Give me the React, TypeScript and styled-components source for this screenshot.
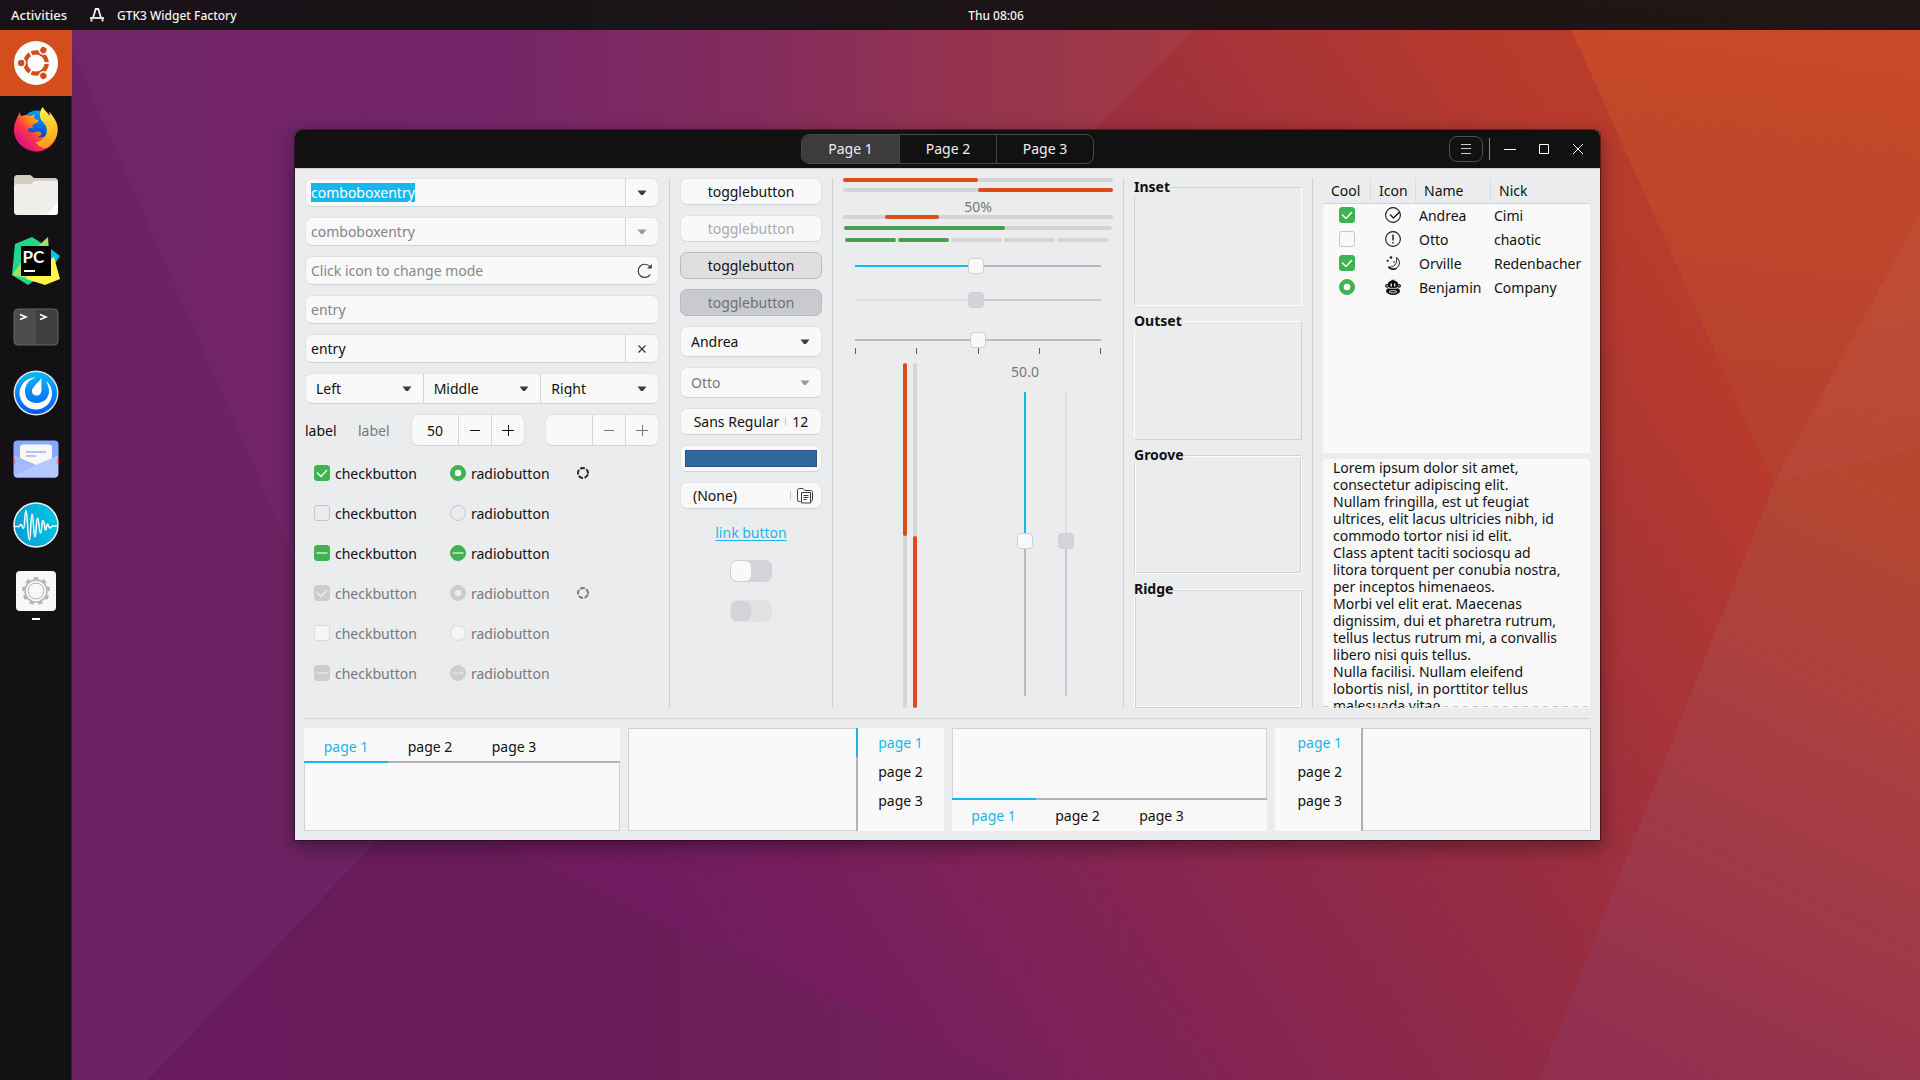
import React, { useEffect, useRef } from "react";
import styled, { createGlobalStyle, css } from "styled-components";

const c = {
  bg: "#ebecee",
  base: "#f9f9f9",
  text: "#111111",
  dim: "#77787a",
  line: "#d3d4d8",
  strong: "#b0b3b9",
  blue: "#19b6ee",
  green: "#3eb34f",
  level: "#469f51",
  orange: "#df4a16",
  trough: "#d3d4d6",
};

const GlobalStyle = createGlobalStyle`
  * { box-sizing: border-box; }
  body {
    margin: 0;
    background: #6c2363;
    color: ${c.text};
    font: 14px/17px "Noto Sans", "Open Sans", sans-serif;
  }
  button, input, select, textarea { font: inherit; color: inherit; margin: 0; }
  ::selection { background: ${c.blue}; color: #ffffff; }
`;

/* ---------- desktop shell ---------- */

const Screen = styled.div`
  position: relative;
  min-height: 100vh;
  display: grid;
  grid-template: 30px 1fr / 72px 1fr;
  isolation: isolate;
`;

const WallpaperArt = styled.svg`
  position: absolute;
  inset: 0;
  width: 100%;
  height: 100%;
  z-index: -1;
`;

const TopBar = styled.header`
  grid-column: 1 / -1;
  display: grid;
  grid-template-columns: 72px 1fr;
  align-items: center;
  background: rgba(17, 17, 17, 0.92);
  color: #f2f2f2;
  font-size: 12px;
  font-weight: 500;
`;

const TopLeft = styled.div`
  grid-area: 1 / 1 / 2 / -1;
  display: flex;
  align-items: center;
  padding-left: 10px;
  gap: 22px;
`;

const AppName = styled.div`
  display: flex;
  align-items: center;
  gap: 13px;
`;

const Clock = styled.time`
  grid-area: 1 / 2;
  justify-self: center;
`;

const BareButton = styled.button`
  display: flex;
  align-items: center;
  justify-content: center;
  padding: 0;
  border: 0;
  background: none;
`;

const ActivitiesButton = styled(BareButton)`
  min-width: 58px;
  font-size: 13px;
`;

const Dock = styled.nav`
  display: flex;
  flex-direction: column;
  background: rgba(17, 17, 17, 0.96);
  border-right: 1px solid #2c2a2c;
`;

const DockItem = styled(BareButton)<{ $active?: boolean; $running?: boolean }>`
  position: relative;
  height: 66px;
  margin-right: -1px;
  background: ${(p) => (p.$active ? "#d44e1d" : "none")};
  &::after {
    content: "";
    display: ${(p) => (p.$running ? "block" : "none")};
    position: absolute;
    left: 32px;
    bottom: 4px;
    width: 8px;
    height: 2px;
    background: #ffffff;
  }
`;

const Workspace = styled.main`
  padding: 100px 320px 100px 223px;
`;

/* ---------- window ---------- */

const Window = styled.section`
  border-radius: 6px 6px 0 0;
  background: ${c.bg};
  box-shadow: 0 0 0 1px rgba(0, 0, 0, 0.4), 0 6px 18px 2px rgba(0, 0, 0, 0.35);
`;

const HeaderBar = styled.header`
  display: grid;
  grid-template-columns: 1fr auto 1fr;
  align-items: center;
  height: 39px;
  border-radius: 6px 6px 0 0;
  border-bottom: 1px solid #cbccd0;
  background: #111111;
  color: #eeeeee;
`;

const StackSwitcher = styled.div`
  grid-column: 2;
  display: flex;
  border: 1px solid #484848;
  border-radius: 8px;
  overflow: hidden;
`;

const StackTab = styled(BareButton)<{ $active?: boolean }>`
  width: 97px;
  height: 28px;
  padding-bottom: 1px;
  background: ${(p) => (p.$active ? "#3c3c3c" : "none")};
  & + & { border-left: 1px solid #484848; }
`;

const WindowControls = styled.div`
  grid-column: 3;
  justify-self: end;
  display: flex;
  align-items: center;
  padding-right: 5px;
`;

const MenuButton = styled(BareButton)`
  width: 34px;
  height: 26px;
  border: 1px solid #4e4e4e;
  border-radius: 8px;
`;

const ControlSeparator = styled.span`
  width: 1px;
  height: 22px;
  margin: 0 3px 0 6px;
  background: #858585;
`;

const WindowButton = styled(BareButton)`
  width: 34px;
  height: 34px;
`;

const Content = styled.div`
  padding: 9px 10px 9px;
`;

const Columns = styled.div`
  display: grid;
  grid-template-columns: 354fr 1px 142fr 1px 270fr 1px 168fr 1px 267fr;
  gap: 10px;
  & > * { min-width: 0; }
`;

const VRule = styled.span`
  background: #ced0d4;
`;

const HRule = styled.hr`
  height: 1px;
  margin: 10px 0 9px;
  border: 0;
  background: ${c.line};
`;

const Stack = styled.div`
  display: flex;
  flex-direction: column;
  gap: 10px;
`;

/* ---------- entries, combos, buttons ---------- */

const raised = css`
  border: 1px solid #e1e2e5;
  border-bottom-color: ${c.line};
  border-radius: 7px;
  background: ${c.base};
`;

const Entry = styled.div<{ $h?: number }>`
  ${raised}
  display: flex;
  height: ${(p) => p.$h ?? 29}px;
  overflow: hidden;
`;

const EntryInput = styled.input<{ $center?: boolean }>`
  flex: 1;
  min-width: 0;
  height: 100%;
  padding: 0 5px;
  border: 0;
  outline: 0;
  background: none;
  line-height: 17px;
  text-align: ${(p) => (p.$center ? "center" : "left")};
  appearance: textfield;
  &::-webkit-inner-spin-button { display: none; }
  &::placeholder { color: #88898b; opacity: 1; }
  &:disabled { color: #838486; }
`;

const EntryButton = styled(BareButton)<{ $flat?: boolean }>`
  width: ${(p) => (p.$flat ? 26 : 33)}px;
  border-left: ${(p) => (p.$flat ? "0" : `1px solid ${c.line}`)};
  &:disabled { color: ${c.dim}; }
`;

const ComboWrap = styled.span`
  display: grid;
  flex: 1;
  align-items: center;
  & + & { border-left: 1px solid ${c.line}; }
  & > svg {
    grid-area: 1 / 1;
    justify-self: end;
    margin-right: 11px;
    pointer-events: none;
  }
`;

const Select = styled.select`
  grid-area: 1 / 1;
  width: 100%;
  height: 100%;
  padding: 0 24px 0 10px;
  border: 0;
  outline: 0;
  background: none;
  appearance: none;
  &:disabled { color: ${c.dim}; opacity: 1; }
  &:disabled + svg { opacity: 0.5; }
`;

const SpinRow = styled.div`
  display: flex;
  align-items: center;
  gap: 20px;
`;

const TextLabel = styled.span<{ $dim?: boolean }>`
  flex: 1;
  color: ${(p) => (p.$dim ? c.dim : c.text)};
`;

const SpinEntry = styled(Entry)`
  width: 114px;
`;

const Button = styled.button`
  ${raised}
  display: flex;
  align-items: center;
  justify-content: center;
  height: 27px;
  padding: 0 5px;
  &:disabled { color: #a9aaac; }
  &[aria-pressed="true"] {
    border-color: #b9bbc1;
    background: #dfdfe0;
  }
  &[aria-pressed="true"]:disabled {
    background: #c9cace;
    color: #6f7073;
  }
`;

const ButtonRule = styled.i`
  width: 1px;
  height: 9px;
  margin: 0 6px;
  background: #c9cace;
`;

const FileButton = styled(Button)`
  justify-content: flex-start;
  padding: 0 8px 0 12px;
`;

const FileName = styled.span`
  flex: 1;
  text-align: left;
`;

const ColorButton = styled(Button)`
  padding: 4px;
`;

const Swatch = styled.span`
  flex: 1;
  height: 17px;
  border: 1px solid #29568d;
  background: #3268a0;
`;

const LinkCell = styled.div`
  display: flex;
  align-items: center;
  justify-content: center;
  height: 27px;
`;

const Link = styled.a`
  color: ${c.blue};
  text-underline-offset: 2px;
`;

const SwitchCell = styled.label`
  display: flex;
  align-items: center;
  justify-content: center;
  height: 30px;
`;

const SwitchInput = styled.input`
  display: flex;
  width: 42px;
  height: 22px;
  padding: 0;
  border: 1px solid #d0d2d6;
  border-radius: 7px;
  background: #d3d4d8;
  appearance: none;
  &::before {
    content: "";
    width: 20px;
    height: 20px;
    border-radius: 6px;
    background: ${c.base};
  }
  &:checked { background: ${c.green}; justify-content: flex-end; }
  &:disabled { background: #e1e2e3; border-color: #e1e2e3; }
  &:disabled::before { background: #d3d4d8; }
`;

const DisabledGlyph = styled.span`
  display: flex;
  opacity: 0.5;
`;

/* ---------- checks and radios ---------- */

const CheckGrid = styled.div`
  display: grid;
  grid-template-columns: 136px 127px 1fr;
  grid-auto-rows: 34px;
  row-gap: 6px;
  align-items: center;
  padding-left: 9px;
`;

const CheckLabel = styled.label<{ $dim?: boolean }>`
  display: flex;
  align-items: center;
  gap: 5px;
  color: ${(p) => (p.$dim ? c.dim : c.text)};
`;

const Box = styled.span`
  display: inline-grid;
  width: 16px;
  height: 16px;
  & > * { grid-area: 1 / 1; }
  & > svg { pointer-events: none; }
`;

const Tick = styled.input`
  width: 16px;
  height: 16px;
  border: 1px solid #c3c6cf;
  border-radius: ${(p) => (p.type === "radio" ? 8 : 3)}px;
  appearance: none;
  &:checked, &:indeterminate { background: ${c.green}; border-color: ${c.green}; }
  &:disabled { background: #f5f6f7; border-color: #d9dadd; }
  &:disabled:checked, &:disabled:indeterminate { background: #cdcdce; border-color: #cdcdce; }
`;

type MarkState = "on" | "off" | "mixed";

function Mark({ kind, state, disabled, name, label }: {
  kind: "checkbox" | "radio"; state: MarkState; disabled?: boolean; name?: string; label?: string;
}) {
  const ref = useRef<HTMLInputElement>(null);
  useEffect(() => {
    if (ref.current && kind === "checkbox") ref.current.indeterminate = state === "mixed";
  }, [kind, state]);
  const ink = disabled ? "#eeeef0" : "#ffffff";
  return (
    <Box>
      <Tick ref={ref} type={kind} name={name} defaultChecked={state === "on"} disabled={disabled} aria-label={label} />
      {state !== "off" && (
        <svg width="16" height="16" viewBox="0 0 16 16" fill="none" stroke={ink}>
          {state === "mixed" && <path d="M2.5 8h11" strokeWidth="2" opacity="0.55" />}
          {state === "on" && kind === "checkbox" && <path d="M3 7.5l4 4 6-6.5" strokeWidth="1.3" />}
          {state === "on" && kind === "radio" && <circle cx="8" cy="8" r="3.3" fill={ink} stroke="none" />}
        </svg>
      )}
    </Box>
  );
}

function Labelled({ kind, state, disabled, name }: {
  kind: "checkbox" | "radio"; state: MarkState; disabled?: boolean; name?: string;
}) {
  return (
    <CheckLabel $dim={disabled}>
      <Mark kind={kind} state={state} disabled={disabled} name={name} />
      {kind === "checkbox" ? "checkbutton" : "radiobutton"}
    </CheckLabel>
  );
}

/* ---------- progress, levels, scales ---------- */

const Bars = styled.div`
  display: flex;
  flex-direction: column;
  gap: 6px;
`;

const Bar = styled.div<{ $from: number; $to: number; $color?: string; $vertical?: boolean }>`
  position: relative;
  width: ${(p) => (p.$vertical ? "4px" : "auto")};
  height: ${(p) => (p.$vertical ? "auto" : "4px")};
  border-radius: 2px;
  background: ${c.trough};
  &::before {
    content: "";
    position: absolute;
    border-radius: 2px;
    background: ${(p) => p.$color ?? c.orange};
    ${(p) =>
      p.$vertical
        ? css`left: 0; right: 0; top: ${p.$from}%; bottom: ${100 - p.$to}%;`
        : css`top: 0; bottom: 0; left: ${p.$from}%; right: ${100 - p.$to}%;`}
  }
`;

const BarText = styled.span`
  display: block;
  color: ${c.dim};
  text-align: center;
`;

const Levels = styled.div`
  display: flex;
  flex-direction: column;
  gap: 8px;
  padding: 7px 1px 0;
`;

const Segments = styled.div`
  display: flex;
  gap: 2px;
  padding: 0 4px 0 1px;
`;

const Segment = styled.span<{ $on: boolean }>`
  flex: 1;
  height: 4px;
  border-radius: 2px;
  background: ${(p) => (p.$on ? c.level : c.trough)};
`;

const Scales = styled.div`
  display: flex;
  flex-direction: column;
  gap: 18px;
  padding: 16px 12px 0;
`;

const MarkedScale = styled.div`
  display: flex;
  flex-direction: column;
  padding-top: 6px;
`;

const Marks = styled.div`
  display: flex;
  justify-content: space-between;
  & > i { width: 1px; height: 6px; background: #58595b; }
`;

const Range = styled.input<{ $fill: string; $rest: string; $vertical?: boolean }>`
  display: block;
  width: ${(p) => (p.$vertical ? "16px" : "100%")};
  height: ${(p) => (p.$vertical ? "304px" : "16px")};
  writing-mode: ${(p) => (p.$vertical ? "vertical-lr" : "horizontal-tb")};
  appearance: none;
  background: linear-gradient(${(p) => (p.$vertical ? "to bottom" : "to right")}, ${(p) => p.$fill} 50%, ${(p) => p.$rest} 50%)
    center / ${(p) => (p.$vertical ? "2px 100%" : "100% 2px")} no-repeat;
  &::-webkit-slider-thumb {
    width: 16px;
    height: 16px;
    border: 1px solid #cfd0d4;
    border-radius: 4px;
    background: ${c.base};
    appearance: none;
  }
  &:disabled::-webkit-slider-thumb { background: #d3d4d7; }
`;

const Verticals = styled.div`
  display: grid;
  grid-template-columns: 1fr 1fr;
  height: 345px;
  margin-top: 9px;
`;

const VBars = styled.div`
  display: flex;
  justify-content: center;
  gap: 6px;
  padding-right: 2px;
`;

const VScales = styled.div`
  display: flex;
  justify-content: center;
  align-items: flex-end;
  gap: 14px;
  padding-bottom: 12px;
`;

const VScale = styled.div`
  display: flex;
  flex-direction: column;
  align-items: center;
  gap: 12px;
  width: 27px;
`;

/* ---------- frames ---------- */

const Frames = styled.div`
  display: flex;
  flex-direction: column;
  gap: 6px;
`;

const Frame = styled.fieldset<{ $a: string; $b: string; $double?: boolean }>`
  height: 128px;
  margin: 0;
  padding: 0;
  border: 1px solid;
  border-color: ${(p) => `${p.$a} ${p.$b} ${p.$b} ${p.$a}`};
  box-shadow: ${(p) => (p.$double ? `inset 1px 1px ${p.$b}, inset -1px -1px ${p.$a}` : "none")};
  & > legend {
    margin-left: -1px;
    padding: 0 1px 0 0;
    background: ${c.bg};
    font-weight: 700;
    line-height: 18px;
  }
`;

/* ---------- tree and text view ---------- */

const DataColumn = styled.div`
  display: flex;
  flex-direction: column;
  gap: 6px;
`;

const Tree = styled.div`
  flex: 1;
  background: ${c.base};
`;

const Table = styled.table`
  width: 100%;
  table-layout: fixed;
  border-collapse: separate;
  border-spacing: 0;
`;

const HeadCell = styled.th<{ $w?: number }>`
  width: ${(p) => (p.$w ? `${p.$w}px` : "auto")};
  height: 26px;
  padding: 0 0 0 8px;
  border-bottom: 1px solid ${c.line};
  background: ${c.bg};
  font-weight: 400;
  text-align: left;
  & + & { border-left: 1px solid #dcdde0; }
`;

const Cell = styled.td<{ $center?: boolean }>`
  height: 24px;
  padding: 0 0 1px ${(p) => (p.$center ? 1 : 4)}px;
  text-align: ${(p) => (p.$center ? "center" : "left")};
  & > * { display: inline-grid; vertical-align: top; }
`;

const TextFrame = styled.div`
  position: relative;
  height: 249px;
  border-radius: 3px;
  background: ${c.base};
  overflow: hidden;
  &::after {
    content: "";
    position: absolute;
    inset: auto 0 1px 0;
    height: 1px;
    background: repeating-linear-gradient(to right, #c4c5c8 0 5px, transparent 5px 10px);
    pointer-events: none;
  }
`;

const TextArea = styled.textarea`
  display: block;
  width: 100%;
  height: 100%;
  padding: 0 0 0 10px;
  border: 0;
  outline: 0;
  resize: none;
  overflow: hidden;
  background: none;
  white-space: pre;
  line-height: 17px;
`;

/* ---------- notebooks ---------- */

const Notebooks = styled.div`
  display: grid;
  grid-template-columns: repeat(4, 1fr);
  gap: 8px;
  margin: 0 -1px;
`;

type Side = "top" | "right" | "bottom" | "left";

const flow: Record<Side, string> = {
  top: "column",
  right: "row-reverse",
  bottom: "column-reverse",
  left: "row",
};
const inner: Record<Side, string> = { top: "bottom", right: "left", bottom: "top", left: "right" };
const tabSize: Record<Side, string> = {
  top: "width: 84px; height: 35px; padding-top: 4px;",
  right: "width: 88px; height: 29px;",
  bottom: "width: 84px; height: 33px; padding-bottom: 1px;",
  left: "width: 88px; height: 29px; padding-left: 3px;",
};

const Notebook = styled.div<{ $side: Side }>`
  display: flex;
  flex-direction: ${(p) => flow[p.$side]};
  height: 103px;
  background: ${c.base};
`;

const TabStrip = styled.div<{ $side: Side }>`
  display: flex;
  flex-direction: ${(p) => (p.$side === "top" || p.$side === "bottom" ? "row" : "column")};
  box-shadow: inset ${(p) =>
    ({ top: "0 -2px", right: "2px 0", bottom: "0 2px", left: "-2px 0" })[p.$side]} ${c.strong};
`;

const NotebookTab = styled(BareButton)<{ $side: Side; $active: boolean; $bar: boolean }>`
  ${(p) => tabSize[p.$side]}
  border: 0 solid transparent;
  border-${(p) => inner[p.$side]}: 2px solid ${(p) => (p.$bar ? c.blue : "transparent")};
  color: ${(p) => (p.$active ? c.blue : c.text)};
`;

const NotebookPage = styled.div<{ $side: Side }>`
  flex: 1;
  border: 1px solid #d0d2d6;
  border-${(p) => p.$side}: 0;
`;

/* ---------- drawings ---------- */

function Wallpaper() {
  return (
    <WallpaperArt viewBox="0 0 1920 1080" preserveAspectRatio="xMidYMid slice" aria-hidden="true">
      <defs>
        <linearGradient id="sky" gradientUnits="userSpaceOnUse" x1="500" y1="950" x2="1800" y2="100">
          <stop offset="0" stopColor="#6d1b60" />
          <stop offset="0.15" stopColor="#731c60" />
          <stop offset="0.27" stopColor="#7c2159" />
          <stop offset="0.4" stopColor="#87264f" />
          <stop offset="0.56" stopColor="#952c43" />
          <stop offset="0.72" stopColor="#a73437" />
          <stop offset="0.85" stopColor="#b73a2d" />
          <stop offset="1" stopColor="#bf4029" />
        </linearGradient>
        <linearGradient id="violet" gradientUnits="userSpaceOnUse" x1="72" y1="0" x2="1200" y2="0">
          <stop offset="0" stopColor="#70246a" />
          <stop offset="0.35" stopColor="#73256a" />
          <stop offset="0.6" stopColor="#822b5d" />
          <stop offset="0.8" stopColor="#95344f" />
          <stop offset="1" stopColor="#a43a42" />
        </linearGradient>
        <linearGradient id="ember" x1="0.6" y1="0" x2="0.5" y2="1">
          <stop offset="0" stopColor="#c84a28" />
          <stop offset="1" stopColor="#b4402f" />
        </linearGradient>
        <linearGradient id="rose" x1="0.7" y1="0" x2="0.4" y2="1">
          <stop offset="0" stopColor="#b6472f" />
          <stop offset="0.45" stopColor="#a83e42" />
          <stop offset="1" stopColor="#923050" />
        </linearGradient>
        <linearGradient id="plum" x1="0" y1="0" x2="1" y2="0">
          <stop offset="0" stopColor="#671b5d" />
          <stop offset="0.55" stopColor="#6a1d5a" />
          <stop offset="1" stopColor="#72205a" />
        </linearGradient>
      </defs>
      <rect width="1920" height="1080" fill="url(#sky)" />
      <path d="M0 0H1222L1095 130L700 600L480 835H0Z" fill="url(#violet)" />
      <path d="M1558 0L1774 483L1920 448V0Z" fill="url(#ember)" />
      <path d="M1774 483L1920 213V448Z" fill="#ffffff" opacity="0.04" />
      <path d="M1774 483L1920 448V1080H1539Z" fill="url(#rose)" />
      <path d="M50 0L295 560L480 835L378 840L148 1080H0V0Z" fill="#6c2363" />
      <path d="M378 840L148 1080H1010L480 835Z" fill="url(#plum)" />
    </WallpaperArt>
  );
}

const Arrow = () => (
  <svg width="10" height="6" viewBox="0 0 10 6" fill="#3b3b3b" aria-hidden="true">
    <path d="M0.5 0.5h9L6 5H4z" />
  </svg>
);

const Minus = () => (
  <svg width="12" height="12" viewBox="0 0 12 12" fill="none" stroke="currentColor" aria-hidden="true">
    <path d="M1 6.5h10" />
  </svg>
);

const Plus = () => (
  <svg width="12" height="12" viewBox="0 0 12 12" fill="none" stroke="currentColor" aria-hidden="true">
    <path d="M0 6.5h12M6.5 1v11" />
  </svg>
);

const Reload = () => (
  <svg width="16" height="16" viewBox="0 0 16 16" fill="none" stroke="#3b3b3b" aria-hidden="true">
    <path d="M13.2 11.6A6.6 6.6 0 1 1 12.8 3.6" strokeWidth="1.2" />
    <path d="M14.8 1v4.6h-4.6z" fill="#3b3b3b" stroke="none" />
  </svg>
);

const Clear = () => (
  <svg width="8" height="8" viewBox="0 0 8 8" fill="none" stroke="#3b3b3b" strokeWidth="1.3" aria-hidden="true">
    <path d="M0.5 0.5l7 7M7.5 0.5l-7 7" />
  </svg>
);

const Folder = () => (
  <svg width="16" height="16" viewBox="0 0 16 16" fill="none" stroke="#3b3b3b" aria-hidden="true">
    <path d="M3.5 13.5H2.3a1.8 1.8 0 0 1-1.8-1.8V2.3c0-1 .8-1.8 1.8-1.8H6l2 2h5.7c1 0 1.8.8 1.8 1.8v7.4c0 1-.8 1.800-1.8 1.800" />
    <path d="M4.5 4.5h9v10.500h-9zM6.5 7.500h5M6.5 9.500h5M6.5 11.500h3" />
  </svg>
);

const Spinner = ({ dim }: { dim?: boolean }) => (
  <svg width="12" height="12" viewBox="0 0 12 12" fill="none" stroke={dim ? "#7b7c7e" : "#2a2a2a"} strokeWidth="2" aria-hidden="true">
    <circle cx="6" cy="6" r="5" strokeDasharray="4.8 1.483" transform="rotate(15 6 6)" />
  </svg>
);

const rowIcons: Record<string, React.ReactNode> = {
  ok: (
    <g fill="none" stroke="#1a1a1a" strokeWidth="1.1">
      <circle cx="8" cy="8" r="7.4" />
      <path d="M5 7.500l3.500 3.500L14.500 5" strokeWidth="1.400" />
    </g>
  ),
  alert: (
    <g fill="none" stroke="#1a1a1a" strokeWidth="1.1">
      <circle cx="8" cy="8" r="7.4" />
      <path d="M8 3.500v6M8 11v1.600" strokeWidth="1.400" />
    </g>
  ),
  night: (
    <g fill="none" stroke="#1a1a1a">
      <path d="M11.5 2.500c2.500 1.500 3.600 4.200 2.600 7.300-1.300 3.900-6.500 5.900-10.600 2.200 5.400 1 9.200-3.500 8-9.500z" />
      <path d="M3.500 12c1.300 2 5 3.200 8 1.300" strokeWidth="1.400" />
      <circle cx="6" cy="2.500" r="1.300" fill="#1a1a1a" stroke="none" />
      <circle cx="2.700" cy="5.800" r="1.100" fill="#1a1a1a" stroke="none" />
      <path d="M8.500 7.500l1-1" strokeWidth="1.200" />
    </g>
  ),
  monkey: (
    <g fill="#0c0c0c">
      <path d="M7 .2l1 1.200L9.500.2l-.1 1.600C12 2.300 13.500 4 13.500 6.500L11 9H5L2.500 6.500C2.500 4 4 2.300 6.300 1.800z" />
      <circle cx="2" cy="6.800" r="1.900" />
      <circle cx="14" cy="6.800" r="1.900" />
      <ellipse cx="8" cy="12" rx="7" ry="4" />
      <path d="M6.300 4.500v3M9.700 4.500v3" stroke="#f9f9f9" strokeWidth="1.300" />
      <path d="M3.500 9.300h9" stroke="#f9f9f9" strokeWidth=".8" />
      <ellipse cx="8" cy="12.800" rx="4" ry="1.200" fill="none" stroke="#f9f9f9" strokeWidth=".8" />
      <circle cx="2" cy="6.800" r=".7" fill="#f9f9f9" />
      <circle cx="14" cy="6.800" r=".7" fill="#f9f9f9" />
    </g>
  ),
};

const UbuntuIcon = () => {
  const arms = [0, 120, 240];
  return (
    <svg width="44" height="44" viewBox="-22 -22 44 44" aria-hidden="true">
      <circle r="22" fill="#ffffff" />
      <circle r="10.7" fill="none" stroke="#d44e1d" strokeWidth="4.3" />
      {arms.map((a) => (
        <g key={a} transform={`rotate(${a})`}>
          <path d="M6 0H15" stroke="#ffffff" strokeWidth="1.8" />
          <circle cx="-14.8" r="4.8" fill="#ffffff" />
          <circle cx="-14.8" r="3.2" fill="#d44e1d" />
        </g>
      ))}
    </svg>
  );
};

const FirefoxIcon = () => (
  <svg width="46" height="46" viewBox="0 0 46 46" aria-hidden="true">
    <defs>
      <linearGradient id="fx-body" x1="0.9" y1="0.1" x2="0.15" y2="0.85">
        <stop offset="0" stopColor="#ffd93b" />
        <stop offset="0.35" stopColor="#ff9416" />
        <stop offset="0.65" stopColor="#ff3647" />
        <stop offset="1" stopColor="#d8137f" />
      </linearGradient>
      <linearGradient id="fx-globe" x1="0.6" y1="0" x2="0.4" y2="1">
        <stop offset="0" stopColor="#00a4ff" />
        <stop offset="0.6" stopColor="#0a5fe0" />
        <stop offset="1" stopColor="#3a1f8f" />
      </linearGradient>
      <linearGradient id="fx-tail" x1="0.4" y1="0" x2="0.6" y2="1">
        <stop offset="0" stopColor="#fff44f" />
        <stop offset="1" stopColor="#ff9a0f" />
      </linearGradient>
    </defs>
    <path d="M7 6c0 2 .5 3.500 1.500 4.500L14 12l18 5 8-6c3 4 4.500 7 4.500 11C45 36 35 45.500 23.500 45.500S1 36 1 24C1 17 4 12 7 6z" fill="url(#fx-body)" />
    <circle cx="24" cy="20" r="15.500" fill="url(#fx-globe)" />
    <path d="M3 16C5 10 11 8 17 10c2 0 3-1.500 5-2-1 2-1.200 3-.2 5 2 .7 3 1 3.700 1.700-.3 2.300-4 2.800-5.500 4-1 .8-.5 2.300 0 3.800-2-.5-4.500-1-5 1 0 2 2 3 4.500 3 3 0 4-1.700 7.500-.5 3 1.500 1 3.500-2.500 5 5 1.500 10-1 11.500-6L38 36 22 43 4 34z" fill="url(#fx-body)" />
    <path d="M29.500 1C26 6 26 12 30 16c5 5 5 12 0 17-2 2-5 3-7 3 2 4 6 6 10 6 9-5 13-13 11-22-1.500-7-5-11-8-14.500.5 2 .7 3 .5 4.500C34.500 6 31 4 29.500 1z" fill="url(#fx-tail)" />
  </svg>
);

const FilesIcon = () => (
  <svg width="46" height="42" viewBox="0 0 46 42" aria-hidden="true">
    <path d="M1 9V4.500A3.500 3.500 0 0 1 4.500 1h13L21 4h20.500A3.500 3.500 0 0 1 45 7.500V20H1z" fill="#d2cdbd" />
    <path d="M1 13.500A3.500 3.500 0 0 1 4.500 10H18l4-3h19.500A3.500 3.500 0 0 1 45 10.500v27a3.500 3.500 0 0 1-3.500 3.500h-37A3.500 3.500 0 0 1 1 37.500z" fill="#f0efeb" />
    <path d="M45 29v8.500a3.500 3.500 0 0 1-3.500 3.500H33z" fill="#ffffff" />
  </svg>
);

const PyCharmIcon = () => (
  <svg width="48" height="48" viewBox="0 0 48 48" aria-hidden="true">
    <path d="M3 7L20 0l14 9-8 32-10 7L0 38z" fill="#21d789" />
    <path d="M36 0l1 14-12-4zM0 38l12-16 6 20z" fill="#a4e063" />
    <path d="M36 10l12 9-6 9-8-4z" fill="#07c3f2" />
    <path d="M42 20l6 22-15 6-19-6 4-8z" fill="#fcf84a" />
    <rect x="9" y="9" width="30" height="30" fill="#000000" />
    <text x="10.500" y="26" fill="#ffffff" fontFamily="Lato, sans-serif" fontSize="17" fontWeight="700">PC</text>
    <rect x="12" y="33" width="11" height="2" fill="#ffffff" />
  </svg>
);

const TerminalIcon = () => (
  <svg width="46" height="38" viewBox="0 0 46 38" aria-hidden="true">
    <rect x="1" y="1" width="44" height="36" rx="4" fill="#3e3e3e" />
    <path d="M5 1h18v36H5a4 4 0 0 1-4-4V5a4 4 0 0 1 4-4z" fill="#4c4c4c" />
    <rect x="1" y="1" width="44" height="36" rx="4" fill="none" stroke="#666666" />
    <path d="M7 6.500l6 2.500-6 2.500M27 6.500L33 9l-6 2.500" fill="none" stroke="#ffffff" strokeWidth="1.600" />
  </svg>
);

const MattermostIcon = () => (
  <svg width="46" height="46" viewBox="0 0 46 46" aria-hidden="true">
    <defs>
      <linearGradient id="mm" x1="0" y1="0" x2="0" y2="1">
        <stop offset="0" stopColor="#08b9f9" />
        <stop offset="1" stopColor="#0458f4" />
      </linearGradient>
    </defs>
    <circle cx="23" cy="23" r="22.500" fill="#e4e4e4" />
    <circle cx="23" cy="23" r="21" fill="url(#mm)" />
    <path d="M23 7.500C13 7.500 6.500 15 6.500 23.500S14 39.500 23 39.500s16-7 16-16c0-5-2-9.500-6-12.500 1.500 3 3 6 3 10 0 7-5 12-12.500 12S12 28 12 21.500C12 15 16 9.500 23 7.500z" fill="#ffffff" />
    <path d="M28.500 8c0 5-.2 9 0 12 0 3.500-2 5.500-5 5.500s-5-2.500-4.500-5.500C19.500 17.500 25 12.500 28.500 8z" fill="#ffffff" />
  </svg>
);

const MailIcon = () => (
  <svg width="46" height="38" viewBox="0 0 46 38" aria-hidden="true">
    <rect x="0.500" y="0.500" width="45" height="37" rx="4" fill="#89a9ff" />
    <path d="M7 7.500a3 3 0 0 1 3-3h26a3 3 0 0 1 3 3V21L23 30 7 21z" fill="#f8f8f5" />
    <path d="M13 12h20M13 16h10" stroke="#b6c4f4" strokeWidth="2" />
    <path d="M1 15.500L23 25l22-9.500V34a3.500 3.500 0 0 1-3.500 3.500h-37A3.500 3.500 0 0 1 1 34z" fill="#b5c8ff" />
    <path d="M1 15.500L23 25 1 36z" fill="#a3baff" />
    <path d="M0 18h1.500v6H0zM44.500 18H46v6h-1.500z" fill="#ed3146" />
  </svg>
);

const WaveIcon = () => (
  <svg width="46" height="46" viewBox="0 0 46 46" aria-hidden="true">
    <defs>
      <linearGradient id="wave" x1="0" y1="0.700" x2="1" y2="0.300">
        <stop offset="0" stopColor="#0a9cd6" />
        <stop offset="1" stopColor="#00c8e0" />
      </linearGradient>
    </defs>
    <circle cx="23" cy="23" r="22" fill="url(#wave)" stroke="#f4f4f4" strokeWidth="1.500" />
    <path d="M1 24.500h4.500c1.500 0 1.500-2 2.500-2s1.500 4 2.500 4c1.500 0 1-18 2.500-18s1.500 29.500 3.500 29.500c1.500 0 1-26 2.500-26s1.500 23 3 23 1-19 2.500-19 1.500 15 3 15 1-12.500 2.500-12.500 1.500 9.500 2.500 9.500 1-6 2-6 1 4 2.500 4 1-1.800 2-1.800L45 24" fill="none" stroke="#ffffff" strokeWidth="1.500" />
  </svg>
);

const GearIcon = () => (
  <svg width="40" height="40" viewBox="-20 -20 40 40" aria-hidden="true">
    <rect x="-20" y="-20" width="40" height="40" rx="4" fill="#f8f8f8" />
    <g stroke="#b4b4b4" fill="none">
      <circle r="11" strokeWidth="1.500" />
      <circle r="8" />
      {[0, 40, 80, 120, 160, 200, 240, 280, 320].map((a) => (
        <path key={a} d="M-2.200 -12.700h4.400" strokeWidth="2.500" transform={`rotate(${a})`} />
      ))}
    </g>
  </svg>
);

const AppIcon = () => (
  <svg width="14" height="14" viewBox="0 0 14 14" fill="none" stroke="#f2f2f2" strokeWidth="1.8" aria-hidden="true">
    <path d="M3 10L5.700 1h2.600L11 10" />
    <path d="M0 10h14" />
    <path d="M1.500 11v2.500M12.500 11v2.500" />
  </svg>
);

/* ---------- sections ---------- */

function Combo({ value, label, disabled }: { value: string; label: string; disabled?: boolean }) {
  return (
    <ComboWrap>
      <Select aria-label={label} defaultValue={value} disabled={disabled}>
        <option>{value}</option>
      </Select>
      <Arrow />
    </ComboWrap>
  );
}

function EntryColumn() {
  const first = useRef<HTMLInputElement>(null);
  useEffect(() => {
    first.current?.focus();
    first.current?.select();
  }, []);
  const states: MarkState[] = ["on", "off", "mixed"];
  return (
    <Stack>
      <Entry>
        <EntryInput ref={first} defaultValue="comboboxentry" aria-label="Combo entry" />
        <EntryButton aria-label="Show choices"><Arrow /></EntryButton>
      </Entry>
      <Entry>
        <EntryInput defaultValue="comboboxentry" aria-label="Disabled combo entry" disabled />
        <EntryButton aria-label="Show choices" disabled>
          <DisabledGlyph><Arrow /></DisabledGlyph>
        </EntryButton>
      </Entry>
      <Entry>
        <EntryInput placeholder="Click icon to change mode" aria-label="Mode" />
        <EntryButton $flat aria-label="Change mode"><Reload /></EntryButton>
      </Entry>
      <Entry>
        <EntryInput defaultValue="entry" aria-label="Disabled entry" disabled />
      </Entry>
      <Entry>
        <EntryInput defaultValue="entry" aria-label="Entry" />
        <EntryButton aria-label="Clear"><Clear /></EntryButton>
      </Entry>
      <Entry $h={31}>
        <Combo value="Left" label="Left" />
        <Combo value="Middle" label="Middle" />
        <Combo value="Right" label="Right" />
      </Entry>
      <SpinRow>
        <TextLabel>label</TextLabel>
        <TextLabel $dim>label</TextLabel>
        <SpinEntry $h={32}>
          <EntryInput $center type="number" defaultValue={50} aria-label="Amount" />
          <EntryButton aria-label="Decrease"><Minus /></EntryButton>
          <EntryButton aria-label="Increase"><Plus /></EntryButton>
        </SpinEntry>
        <SpinEntry $h={32}>
          <EntryInput $center type="number" aria-label="Disabled amount" disabled />
          <EntryButton aria-label="Decrease" disabled><Minus /></EntryButton>
          <EntryButton aria-label="Increase" disabled><Plus /></EntryButton>
        </SpinEntry>
      </SpinRow>
      <CheckGrid>
        {[false, true].map((disabled) =>
          states.map((state) => (
            <React.Fragment key={`${disabled}-${state}`}>
              <Labelled kind="checkbox" state={state} disabled={disabled} />
              <Labelled
                kind="radio"
                state={state}
                disabled={disabled}
                name={`${disabled ? "locked" : "free"}-${state === "mixed" ? "mixed" : "pair"}`}
              />
              {state === "on" ? <Spinner dim={disabled} /> : <span />}
            </React.Fragment>
          ))
        )}
      </CheckGrid>
    </Stack>
  );
}

function ButtonColumn() {
  return (
    <Stack>
      <Button aria-pressed="false">togglebutton</Button>
      <Button aria-pressed="false" disabled>togglebutton</Button>
      <Button aria-pressed="true">togglebutton</Button>
      <Button aria-pressed="true" disabled>togglebutton</Button>
      <Entry $h={31}><Combo value="Andrea" label="Person" /></Entry>
      <Entry $h={31}><Combo value="Otto" label="Disabled person" disabled /></Entry>
      <Button>Sans Regular<ButtonRule />12</Button>
      <ColorButton aria-label="Colour"><Swatch /></ColorButton>
      <FileButton><FileName>(None)</FileName><ButtonRule /><Folder /></FileButton>
      <LinkCell><Link href="#link">link button</Link></LinkCell>
      <SwitchCell><SwitchInput type="checkbox" role="switch" aria-label="Switch" /></SwitchCell>
      <SwitchCell><SwitchInput type="checkbox" role="switch" aria-label="Disabled switch" disabled /></SwitchCell>
    </Stack>
  );
}

function RangeColumn() {
  return (
    <div>
      <Bars>
        <Bar role="progressbar" aria-label="Progress" $from={0} $to={50} />
        <Bar role="progressbar" aria-label="Inverted progress" $from={50} $to={100} />
        <div>
          <BarText>50%</BarText>
          <Bar role="progressbar" aria-label="Activity" $from={15.5} $to={35.5} />
        </div>
      </Bars>
      <Levels>
        <Bar role="meter" aria-label="Level" aria-valuenow={60} $from={0} $to={60} $color={c.level} />
        <Segments role="meter" aria-label="Steps" aria-valuenow={2}>
          {[0, 1, 2, 3, 4].map((n) => <Segment key={n} $on={n < 2} />)}
        </Segments>
      </Levels>
      <Scales>
        <Range type="range" defaultValue={49} aria-label="Scale" $fill={c.blue} $rest="#b9babd" />
        <Range type="range" defaultValue={49} aria-label="Disabled scale" disabled $fill="#dfe0e2" $rest="#c6c7ca" />
        <MarkedScale>
          <Range type="range" defaultValue={50} aria-label="Marked scale" $fill="#b9babd" $rest="#b9babd" />
          <Marks><i /><i /><i /><i /><i /></Marks>
        </MarkedScale>
      </Scales>
      <Verticals>
        <VBars>
          <Bar role="progressbar" aria-label="Vertical progress" $vertical $from={0} $to={50} />
          <Bar role="progressbar" aria-label="Inverted vertical progress" $vertical $from={50} $to={100} />
        </VBars>
        <VScales>
          <VScale>
            <BarText>50.0</BarText>
            <Range type="range" defaultValue={49} aria-label="Vertical scale" $vertical $fill={c.blue} $rest="#b9babd" />
          </VScale>
          <VScale>
            <Range type="range" defaultValue={49} aria-label="Disabled vertical scale" disabled $vertical $fill="#dfe0e2" $rest="#c6c7ca" />
          </VScale>
        </VScales>
      </Verticals>
    </div>
  );
}

function FrameColumn() {
  const dark = "#d0d2d6";
  const light = "#ffffff";
  return (
    <Frames>
      <Frame $a={dark} $b={light}><legend>Inset</legend></Frame>
      <Frame $a={light} $b={dark}><legend>Outset</legend></Frame>
      <Frame $a={dark} $b={light} $double><legend>Groove</legend></Frame>
      <Frame $a={light} $b={dark} $double><legend>Ridge</legend></Frame>
    </Frames>
  );
}

const people: { name: string; nick: string; icon: string; kind: "checkbox" | "radio"; state: MarkState }[] = [
  { name: "Andrea", nick: "Cimi", icon: "ok", kind: "checkbox", state: "on" },
  { name: "Otto", nick: "chaotic", icon: "alert", kind: "checkbox", state: "off" },
  { name: "Orville", nick: "Redenbacher", icon: "night", kind: "checkbox", state: "on" },
  { name: "Benjamin", nick: "Company", icon: "monkey", kind: "radio", state: "on" },
];

const lorem = [
  "Lorem ipsum dolor sit amet,",
  "consectetur adipiscing elit.",
  "Nullam fringilla, est ut feugiat",
  "ultrices, elit lacus ultricies nibh, id",
  "commodo tortor nisi id elit.",
  "Class aptent taciti sociosqu ad",
  "litora torquent per conubia nostra,",
  "per inceptos himenaeos.",
  "Morbi vel elit erat. Maecenas",
  "dignissim, dui et pharetra rutrum,",
  "tellus lectus rutrum mi, a convallis",
  "libero nisi quis tellus.",
  "Nulla facilisi. Nullam eleifend",
  "lobortis nisl, in porttitor tellus",
  "malesuada vitae.",
].join("\n");

function ListColumn() {
  return (
    <DataColumn>
      <Tree>
        <Table>
          <thead>
            <tr>
              <HeadCell $w={47}>Cool</HeadCell>
              <HeadCell $w={45}>Icon</HeadCell>
              <HeadCell $w={75}>Name</HeadCell>
              <HeadCell>Nick</HeadCell>
            </tr>
          </thead>
          <tbody>
            {people.map((p) => (
              <tr key={p.name}>
                <Cell $center><Mark kind={p.kind} state={p.state} label={`${p.name} is cool`} /></Cell>
                <Cell $center>
                  <svg width="16" height="16" viewBox="0 0 16 16" aria-hidden="true">{rowIcons[p.icon]}</svg>
                </Cell>
                <Cell>{p.name}</Cell>
                <Cell>{p.nick}</Cell>
              </tr>
            ))}
          </tbody>
        </Table>
      </Tree>
      <TextFrame>
        <TextArea aria-label="Text" defaultValue={lorem} spellCheck={false} />
      </TextFrame>
    </DataColumn>
  );
}

function TabbedPane({ side, bar = true }: { side: Side; bar?: boolean }) {
  return (
    <Notebook $side={side}>
      <TabStrip $side={side} role="tablist">
        {["page 1", "page 2", "page 3"].map((t, i) => (
          <NotebookTab key={t} role="tab" aria-selected={i === 0} $side={side} $active={i === 0} $bar={bar && i === 0}>
            {t}
          </NotebookTab>
        ))}
      </TabStrip>
      <NotebookPage $side={side} role="tabpanel" />
    </Notebook>
  );
}

const dockItems = [
  { label: "Show Applications", icon: <UbuntuIcon />, active: true },
  { label: "Firefox", icon: <FirefoxIcon /> },
  { label: "Files", icon: <FilesIcon /> },
  { label: "PyCharm", icon: <PyCharmIcon /> },
  { label: "Terminal", icon: <TerminalIcon /> },
  { label: "Mattermost", icon: <MattermostIcon /> },
  { label: "Mail", icon: <MailIcon /> },
  { label: "System Monitor", icon: <WaveIcon /> },
  { label: "Widget Factory", icon: <GearIcon />, running: true },
];

export default function App() {
  return (
    <Screen>
      <GlobalStyle />
      <Wallpaper />
      <TopBar>
        <TopLeft>
          <ActivitiesButton>Activities</ActivitiesButton>
          <AppName><AppIcon />GTK3 Widget Factory</AppName>
        </TopLeft>
        <Clock>Thu 08:06</Clock>
      </TopBar>
      <Dock>
        {dockItems.map((d) => (
          <DockItem key={d.label} aria-label={d.label} $active={d.active} $running={d.running}>{d.icon}</DockItem>
        ))}
      </Dock>
      <Workspace>
        <Window>
          <HeaderBar>
            <StackSwitcher>
              <StackTab $active>Page 1</StackTab>
              <StackTab>Page 2</StackTab>
              <StackTab>Page 3</StackTab>
            </StackSwitcher>
            <WindowControls>
              <MenuButton aria-label="Menu">
                <svg width="10" height="10" viewBox="0 0 10 10" stroke="#cccccc"><path d="M0 .5h10M0 4.500h10M0 9.500h10" /></svg>
              </MenuButton>
              <ControlSeparator />
              <WindowButton aria-label="Minimise">
                <svg width="12" height="12" viewBox="0 0 12 12" stroke="#ffffff"><path d="M0 6.500h12" /></svg>
              </WindowButton>
              <WindowButton aria-label="Maximise">
                <svg width="10" height="10" viewBox="0 0 10 10" stroke="#ffffff" fill="none"><path d="M.5.5h9v9h-9z" /></svg>
              </WindowButton>
              <WindowButton aria-label="Close">
                <svg width="10" height="10" viewBox="0 0 10 10" stroke="#ffffff"><path d="M0 0l10 10M10 0L0 10" /></svg>
              </WindowButton>
            </WindowControls>
          </HeaderBar>
          <Content>
            <Columns>
              <EntryColumn />
              <VRule />
              <ButtonColumn />
              <VRule />
              <RangeColumn />
              <VRule />
              <FrameColumn />
              <VRule />
              <ListColumn />
            </Columns>
            <HRule />
            <Notebooks>
              <TabbedPane side="top" />
              <TabbedPane side="right" />
              <TabbedPane side="bottom" />
              <TabbedPane side="left" bar={false} />
            </Notebooks>
          </Content>
        </Window>
      </Workspace>
    </Screen>
  );
}
